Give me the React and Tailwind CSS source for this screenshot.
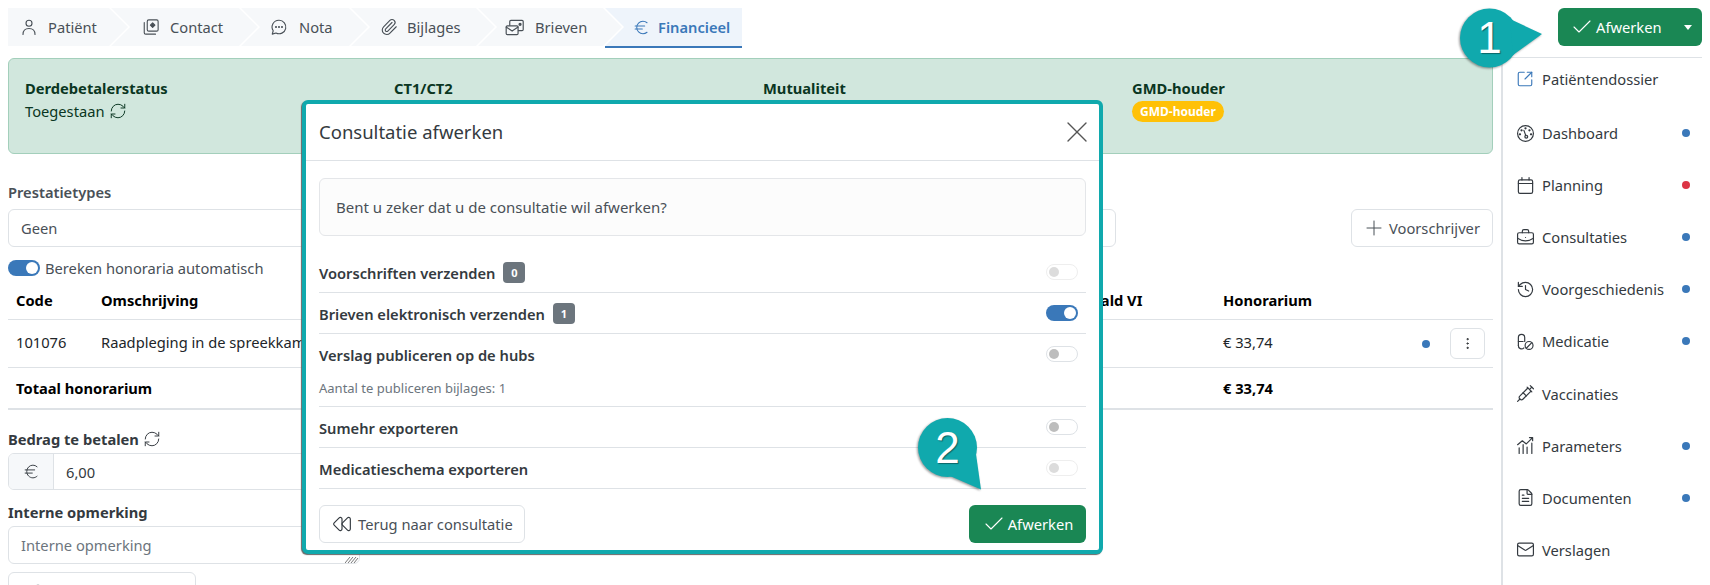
import React from "react";
import {
  Paperclip, Euro, RefreshCw, Check, Plus, X, Rewind, SquareArrowOutUpRight, BriefcaseBusiness,
  History, Syringe, FileText, Mail, EllipsisVertical,
} from "lucide-react";

const S = ({ children, size = 18, className = "" }) => (
  <svg width={size} height={size} viewBox="0 0 24 24" fill="none" stroke="currentColor" strokeWidth="1.5" strokeLinecap="round" strokeLinejoin="round" className={className}>
    {children}
  </svg>
);

const PersonIcon = () => (
  <S><circle cx="12" cy="7" r="4" /><path d="M4 22c0-5 3-8 8-8s8 3 8 8" /></S>
);
const ContactIcon = () => (
  <S>
    <rect x="7" y="2.5" width="14.5" height="15" rx="2" />
    <path d="M3 6v13.5a2 2 0 0 0 2 2h13" />
    <path d="M14.2 6.5l3 3-3 3-3-3z" fill="currentColor" />
  </S>
);
const ChatIcon = () => (
  <S>
    <path d="M12 3a9 9 0 1 1-4 17l-5 1.5 1.3-4.5A9 9 0 0 1 12 3z" />
    <circle cx="8" cy="12" r=".6" fill="currentColor" /><circle cx="12" cy="12" r=".6" fill="currentColor" /><circle cx="16" cy="12" r=".6" fill="currentColor" />
  </S>
);
const LetterIcon = () => (
  <S size={19}>
    <path d="M6 9V4.5A1.5 1.5 0 0 1 7.5 3h14A1.5 1.5 0 0 1 23 4.5v10a1.5 1.5 0 0 1-1.5 1.5H17" />
    <rect x="1.5" y="10" width="15" height="11" rx="1.5" />
    <path d="M1.5 11.5 9 16.5l7.5-5" />
    <circle cx="19" cy="8" r="1.3" fill="currentColor" />
  </S>
);
const DashIcon = () => (
  <S size={19}>
    <circle cx="12" cy="12" r="10" />
    <path d="M10 8l2.5 7" />
    <circle cx="13" cy="16" r="1.8" />
    <circle cx="7" cy="8" r=".7" fill="currentColor" /><circle cx="12" cy="5.5" r=".7" fill="currentColor" /><circle cx="17" cy="8" r=".7" fill="currentColor" /><circle cx="19" cy="13" r=".7" fill="currentColor" /><circle cx="5" cy="13" r=".7" fill="currentColor" />
  </S>
);
const CalIcon = () => (
  <S size={19}>
    <rect x="3" y="5" width="18" height="17" rx="2" />
    <path d="M3 9.5h18M7.5 2v3M16.5 2v3" />
  </S>
);
const MedIcon = () => (
  <S size={19}>
    <path d="M3 17V7a4 4 0 0 1 8 0v5" />
    <path d="M3 12h6M3 17a4 4 0 0 0 7 3" />
    <circle cx="16.5" cy="17" r="5" />
    <path d="M13 20.5l7-7" />
  </S>
);
const ParamIcon = () => (
  <S size={19}>
    <path d="M2 11l6-5 5 4 8-8M17 2h4v4" />
    <path d="M4 22v-7M9 22V11M14 22v-8M20 22V9" />
  </S>
);
const Caret = () => <span className="w-0 h-0 border-x-[4px] border-x-transparent border-t-[5px] border-t-white" />;

const Switch = ({ state }) => {
  if (state === "on")
    return (
      <span className="flex justify-end items-center w-8 h-4 rounded-full bg-[#3a78b9] pr-[2px] shrink-0">
        <span className="w-3 h-3 rounded-full bg-white" />
      </span>
    );
  const dis = state === "disabled";
  return (
    <span className={`flex items-center w-8 h-4 rounded-full border pl-[2px] shrink-0 ${dis ? "border-[#eeeeee]" : "border-[#dee2e6]"}`}>
      <span className={`w-[10px] h-[10px] rounded-full ${dis ? "bg-[#dcdcdc]" : "bg-[#bdbdbd]"}`} />
    </span>
  );
};

const Dot = ({ red }) => <span className={`w-2 h-2 rounded-full ${red ? "bg-[#dc3545]" : "bg-[#3a78b9]"}`} />;

const tabs = [
  { l: "Patiënt", i: <PersonIcon />, w: "w-[120px]", pl: "pl-3", gap: "gap-[10px]" },
  { l: "Contact", i: <ContactIcon />, w: "w-[147px]", pl: "pl-[31px]", gap: "gap-[10px]" },
  { l: "Nota", i: <ChatIcon />, w: "w-[127px]", pl: "pl-[29px]", gap: "gap-[11px]" },
  { l: "Bijlages", i: <Paperclip size={18} strokeWidth={1.5} />, w: "w-[144px]", pl: "pl-[29px]", gap: "gap-[9px]" },
  { l: "Brieven", i: <LetterIcon />, w: "w-[144px]", pl: "pl-[27px]", gap: "gap-[11px]" },
];

const side = [
  ["Patiëntendossier", <SquareArrowOutUpRight size={18} strokeWidth={1.5} className="text-[#3a78b9]" />, null],
  ["Dashboard", <DashIcon />, "b"],
  ["Planning", <CalIcon />, "r"],
  ["Consultaties", <BriefcaseBusiness size={19} strokeWidth={1.5} />, "b"],
  ["Voorgeschiedenis", <History size={19} strokeWidth={1.5} />, "b"],
  ["Medicatie", <MedIcon />, "b"],
  ["Vaccinaties", <Syringe size={19} strokeWidth={1.5} />, null],
  ["Parameters", <ParamIcon />, "b"],
  ["Documenten", <FileText size={19} strokeWidth={1.5} />, "b"],
  ["Verslagen", <Mail size={19} strokeWidth={1.5} />, null],
];

const Row = ({ children, sw, sub }) => (
  <div className="border-b border-[#dee2e6]">
    <div className="flex items-center justify-between pr-2 h-[40px]">
      <div className="flex items-center gap-[8px] pt-[2px] font-semibold text-[#343a40]">{children}</div>
      <Switch state={sw} />
    </div>
    {sub && <div className="text-[13px] text-[#6c757d] h-[32px] pt-[4px] leading-[20px]">{sub}</div>}
  </div>
);

const Badge = ({ children }) => (
  <span className="flex items-center justify-center w-[22px] h-[21px] rounded-[4px] bg-[#6c757d] text-white text-[11px] font-bold">{children}</span>
);

export default function App() {
  return (
    <div className="relative w-[1710px] h-[585px] overflow-hidden bg-white text-[14.7px] text-[#343a40] font-['Noto_Sans',sans-serif]">
      <header className="flex h-[58px] pt-2 px-2">
        <nav className="flex h-[40px]">
          {tabs.map((t, i) => (
            <div
              key={t.l}
              className={`h-[38px] flex items-center bg-[#f6f8fa] text-[#495057] ${t.w} ${t.pl} ${t.gap} ${i > 0 ? "-ml-[17px]" : ""} ${i === 0 ? "[clip-path:polygon(0_0,calc(100%-19px)_0,100%_50%,calc(100%-19px)_100%,0_100%)]" : "[clip-path:polygon(0_0,calc(100%-19px)_0,100%_50%,calc(100%-19px)_100%,0_100%,19px_50%)]"}`}
            >
              {t.i}
              <span>{t.l}</span>
            </div>
          ))}
          <div className="-ml-[17px] w-[137px] h-[40px] border-b-2 border-[#3a78b9]">
            <div className="h-[38px] flex items-center gap-[7px] pl-[27px] bg-[#eef4fb] text-[#3a78b9] font-semibold [clip-path:polygon(0_0,100%_0,100%_100%,0_100%,19px_50%)]">
              <Euro size={19} strokeWidth={1.3} />
              <span>Financieel</span>
            </div>
          </div>
        </nav>
        <button className="ml-auto flex items-center w-[144px] h-[38px] rounded-md bg-[#1a8754] text-white pl-3">
          <Check size={24} strokeWidth={1.1} />
          <span className="ml-[2px]">Afwerken</span>
          <span className="ml-auto mr-[10px] flex"><Caret /></span>
        </button>
      </header>

      <div className="flex">
        <main className="w-[1501px] pl-2 pr-2 shrink-0">
          <section className="grid grid-cols-[369px_369px_369px_1fr] h-[96px] rounded-md bg-[#d1e7dd] border border-[#a3cfbb] pl-4 pt-[19px] text-[#0a3622]">
            <div>
              <div className="font-bold leading-5">Derdebetalerstatus</div>
              <div className="flex items-center gap-1 leading-5 mt-[3px]">Toegestaan <RefreshCw size={18} strokeWidth={1.3} /></div>
            </div>
            <div className="font-bold leading-5">CT1/CT2</div>
            <div className="font-bold leading-5">Mutualiteit</div>
            <div>
              <div className="font-bold leading-5">GMD-houder</div>
              <span className="inline-flex items-center mt-[3px] h-[21px] px-[8px] rounded-full bg-[#ffc107] text-white text-[12px] font-bold">GMD-houder</span>
            </div>
          </section>

          <div className="mt-[28px] leading-5 font-semibold text-[#495057]">Prestatietypes</div>
          <div className="flex mt-[7px]">
            <div className="w-[1108px] h-[38px] border border-[#dee2e6] rounded-md flex items-center px-3 text-[#495057]">Geen</div>
            <button className="ml-auto w-[142px] h-[38px] border border-[#dee2e6] rounded-md flex items-center pl-[10px] gap-[3px] text-[#495057]">
              <Plus size={24} strokeWidth={1} />Voorschrijver
            </button>
          </div>
          <div className="flex items-center h-5 mt-[11px] gap-[5px] text-[#495057]">
            <Switch state="on" />
            Bereken honoraria automatisch
          </div>

          <div className="grid grid-cols-[85px_925px_197px_197px_1fr] items-center h-[42px] pt-1 pl-2 font-bold text-black border-b border-[#dee2e6]">
            <span>Code</span><span>Omschrijving</span><span>Terugbetaald VI</span><span>Honorarium</span>
          </div>
          <div className="grid grid-cols-[85px_925px_197px_197px_1fr] items-center h-[48px] pl-2 text-[#212529] border-b border-[#dee2e6]">
            <span className="pb-[3px]">101076</span><span className="pb-[3px]">Raadpleging in de spreekkamer</span><span></span><span className="pb-[3px]">€ 33,74</span>
            <span className="flex items-center pl-[2px]">
              <Dot />
              <span className="ml-5 w-[35px] h-[31px] rounded-md border border-[#dee2e6] flex items-center justify-center">
                <EllipsisVertical size={15} strokeWidth={1.5} />
              </span>
            </span>
          </div>
          <div className="grid grid-cols-[85px_925px_197px_197px_1fr] items-center h-[42px] pl-2 font-bold text-black border-b-2 border-[#dee2e6]">
            <span className="col-span-3">Totaal honorarium</span><span>€ 33,74</span>
          </div>

          <div className="flex items-center gap-1 mt-[19px] leading-5 font-bold text-[#343a40]">Bedrag te betalen <RefreshCw size={18} strokeWidth={1.3} /></div>
          <div className="flex w-[352px] h-[37px] mt-[4px] border border-[#dee2e6] rounded-md overflow-hidden">
            <span className="w-[45px] bg-[#f6f8fa] border-r border-[#dee2e6] flex items-center justify-center"><Euro size={19} strokeWidth={1.2} /></span>
            <span className="flex items-center pl-3 pt-[1px]">6,00</span>
          </div>
          <div className="mt-[12px] leading-5 font-bold text-[#343a40]">Interne opmerking</div>
          <div className="relative w-[352px] h-[38px] mt-1 border border-[#dee2e6] rounded-md flex items-center px-3 text-[#6c757d]">
            Interne opmerking
            <svg width="14" height="7" viewBox="0 0 14 7" stroke="#777" strokeWidth="1" className="absolute right-0 bottom-0">
              <path d="M0 7 5 1M3 7 8 1M6 7 11 1M9 7 13 2" />
            </svg>
          </div>
          <div className="w-[188px] h-[38px] mt-2 border border-[#dee2e6] rounded-md pl-5 pt-[10px] text-[#343a40]">
            <PersonIcon />
          </div>
        </main>

        <aside className="flex-1 mr-2 -mt-px border-t border-l-2 border-[#dee2e6] pl-[13px] pt-[9px] flex flex-col gap-[28.1px] text-[#343a40]">
          {side.map(([l, i, d], n) => (
            <div key={l} className={`flex items-center h-6 ${n === 0 ? "mb-[2px]" : ""}`}>
              <span className="w-[26px] flex">{i}</span>
              <span>{l}</span>
              {d && <span className="ml-auto mr-3 flex"><Dot red={d === "r"} /></span>}
            </div>
          ))}
        </aside>
      </div>

      {/* modal */}
      <div className="absolute left-[302px] top-[100px] w-[801px] h-[454px] border-4 border-[#10a9ad] rounded-md bg-white shadow-[-1px_1px_1px_#666]">
        <div className="flex items-center justify-between h-[57px] px-[13px] border-b border-[#dee2e6]">
          <span className="text-[18.5px] text-[#343a40]">Consultatie afwerken</span>
          <X size={36} strokeWidth={0.9} className="text-[#555] -mr-[9px]" />
        </div>
        <div className="px-[13px] pt-[17px]">
          <div className="h-[58px] rounded-md border border-[#e4e6e9] bg-[#fcfcfc] flex items-center pl-4 text-[15px] text-[#495057]">
            Bent u zeker dat u de consultatie wil afwerken?
          </div>
          <div className="mt-[16px]">
            <Row sw="disabled">Voorschriften verzenden <Badge>0</Badge></Row>
            <Row sw="on">Brieven elektronisch verzenden <Badge>1</Badge></Row>
            <Row sw="off" sub="Aantal te publiceren bijlages: 1">Verslag publiceren op de hubs</Row>
            <Row sw="off">Sumehr exporteren</Row>
            <Row sw="disabled">Medicatieschema exporteren</Row>
          </div>
          <div className="flex justify-between mt-[16px]">
            <button className="flex items-center gap-[6px] w-[206px] h-[38px] rounded-md border border-[#dee2e6] pl-3 text-[#495057]">
              <Rewind size={20} strokeWidth={1.4} className="text-[#343a40]" />Terug naar consultatie
            </button>
            <button className="flex items-center justify-center gap-[2px] w-[117px] h-[38px] rounded-md bg-[#1a8754] text-white">
              <Check size={24} strokeWidth={1.1} />Afwerken
            </button>
          </div>
        </div>
      </div>

      {/* callout 1 */}
      <div className="absolute left-[1460px] top-[8px] w-[85px] h-[60px]">
        <svg width="85" height="60" className="drop-shadow-[-1px_1px_1px_rgba(0,0,0,0.4)]">
          <circle cx="29.5" cy="30" r="29.5" fill="#10a9ad" />
          <path d="M50 11L82 26L53 47z" fill="#10a9ad" />
        </svg>
        <span className="absolute left-0 top-0 w-[59px] h-[60px] flex items-center justify-center text-white text-[44px] font-['Liberation_Sans',sans-serif] [text-shadow:1px_1px_1px_rgba(0,0,0,0.4)]">1</span>
      </div>
      {/* callout 2 */}
      <div className="absolute left-[918px] top-[418px] w-[66px] h-[74px]">
        <svg width="66" height="74" className="drop-shadow-[-1px_1px_1px_rgba(0,0,0,0.4)]">
          <circle cx="29.5" cy="29.5" r="29.5" fill="#10a9ad" />
          <path d="M58 36L63 71.5L32 58z" fill="#10a9ad" />
        </svg>
        <span className="absolute left-0 top-0 w-[59px] h-[59px] flex items-center justify-center text-white text-[44px] font-['Liberation_Sans',sans-serif] [text-shadow:1px_1px_1px_rgba(0,0,0,0.4)]">2</span>
      </div>
    </div>
  );
}
